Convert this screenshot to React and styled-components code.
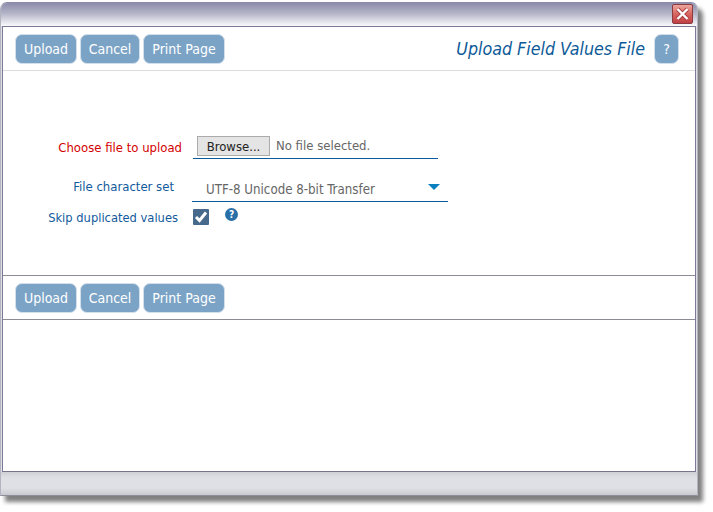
import React from 'react';
import styled, { createGlobalStyle } from 'styled-components';

const GlobalStyle = createGlobalStyle`
    html, body {
        margin: 0;
        padding: 0;
        background: #fff;
    }
    body {
        font-family: "DejaVu Sans Condensed", "DejaVu Sans", sans-serif;
    }
`;

const Page = styled.div`
    width: 713px;
    height: 512px;
    padding-top: 2px;
    box-sizing: border-box;
    overflow: hidden;
`;

const Window = styled.div`
    width: 698px;
    height: 494px;
    box-sizing: border-box;
    display: flex;
    flex-direction: column;
    padding: 0 1px;
    border: 1px solid #b4b4c0;
    border-top-color: #8d8dab;
    border-bottom-color: #8f8f9c;
    border-radius: 7px 7px 0 0;
    background: #e0e1e6;
    box-shadow: 5px 6px 4px #808080;
`;

const TitleBar = styled.div`
    height: 23px;
    flex: none;
    margin: 0 -1px;
    display: flex;
    justify-content: flex-end;
    padding-right: 4px;
    border-radius: 6px 6px 0 0;
    background: linear-gradient(#8d8dab, #b4b4c8 45%, #fbfbfd);
`;

const CloseButton = styled.div`
    width: 21px;
    height: 20px;
    margin-top: 1px;
    box-sizing: border-box;
    display: flex;
    align-items: center;
    justify-content: center;
    border: 1px solid #8e3b40;
    border-radius: 2px;
    background: linear-gradient(#eba79f, #d9655f 50%, #bf4044);
`;

const Body = styled.div`
    flex: 1;
    display: flex;
    flex-direction: column;
    background: #fff;
    border: 1px solid #7c7a98;
    border-bottom-color: #77758e;
`;

const Toolbar = styled.div`
    flex: none;
    box-sizing: border-box;
    display: flex;
    align-items: center;
    gap: 3px;
    padding: 0 16px 0 12px;
    border-bottom: 1px solid ${(p) => (p.$dark ? '#8c8c94' : '#dcdcdf')};
    border-top: ${(p) => (p.$dark ? '1px solid #8c8c94' : 'none')};
    height: ${(p) => (p.$dark ? '45px' : '44px')};
`;

const Button = styled.div`
    height: 30px;
    width: ${(p) => p.$width}px;
    box-sizing: border-box;
    padding-top: 1px;
    display: flex;
    align-items: center;
    justify-content: center;
    color: #fff;
    font-size: 14px;
    background: #7ba3c6;
    border: 1px solid #d3e0ec;
    border-radius: 7px;
`;

const ScreenTitle = styled.div`
    margin-left: auto;
    margin-right: 6px;
    color: #0d5a98;
    font-size: 17.7px;
    font-style: italic;
    white-space: nowrap;
`;

const Form = styled.div`
    height: 204px;
    flex: none;
    box-sizing: border-box;
    padding-top: 65px;
`;

const Row = styled.div`
    display: flex;
    align-items: flex-start;
    height: ${(p) => p.$height}px;
`;

const Label = styled.div`
    width: ${(p) => p.$width}px;
    padding-top: ${(p) => p.$top}px;
    flex: none;
    box-sizing: border-box;
    text-align: right;
    white-space: nowrap;
    font-size: ${(p) => p.$size || 13}px;
    color: ${(p) => (p.$required ? '#d40000' : '#125a9c')};
`;

const FileField = styled.div`
    width: 245px;
    height: 23px;
    margin-left: 11px;
    padding-left: 4px;
    box-sizing: border-box;
    display: flex;
    gap: 6px;
    border-bottom: 1px solid #0b5a9e;
    font-size: 13px;
    color: #666;
`;

const Browse = styled.div`
    width: 73px;
    height: 20px;
    box-sizing: border-box;
    display: flex;
    align-items: center;
    justify-content: center;
    color: #222;
    background: #e4e4e4;
    border: 1px solid #ababab;
`;

const FileName = styled.div`
    line-height: 20px;
`;

const SelectField = styled.div`
    width: 256px;
    height: 25px;
    margin-left: 18px;
    padding: 1px 8px 0 14px;
    box-sizing: border-box;
    display: flex;
    align-items: center;
    justify-content: space-between;
    border-bottom: 1px solid #0b5a9e;
    font-size: 13.2px;
    color: #666;
`;

const Arrow = styled.div`
    width: 0;
    height: 0;
    margin-bottom: 5px;
    border-left: 6px solid transparent;
    border-right: 6px solid transparent;
    border-top: 6px solid #0a7fc0;
`;

const CheckBox = styled.div`
    width: 16px;
    height: 16px;
    margin-left: 15px;
    display: flex;
    align-items: center;
    justify-content: center;
    background: #46698c;
    border-radius: 1px;
`;

const HelpDot = styled.div`
    width: 13px;
    height: 13px;
    margin-left: 16px;
    margin-top: -1px;
    border-radius: 50%;
    display: flex;
    align-items: center;
    justify-content: center;
    background: #2a70a8;
    color: #fff;
    font-size: 10px;
    font-weight: bold;
`;

const Empty = styled.div`
    flex: 1;
`;

const Footer = styled.div`
    height: 23px;
    flex: none;
    margin: 0 -1px;
    background: linear-gradient(#cfd0d6, #dfe0e5 25%, #dfe0e5 70%, #c9cad0);
`;

const Buttons = () => (
    <>
        <Button $width={62}>Upload</Button>
        <Button $width={60}>Cancel</Button>
        <Button $width={82}>Print Page</Button>
    </>
);

const App = () => {
    return (
        <Page>
            <GlobalStyle />
            <Window>
                <TitleBar>
                    <CloseButton>
                        <svg width="15" height="14" viewBox="0 0 15 14">
                            <path d="M2.5 2 L12.5 12 M12.5 2 L2.5 12" stroke="#a83c3e" strokeWidth="4" fill="none" />
                            <path d="M2.5 2 L12.5 12 M12.5 2 L2.5 12" stroke="#fff" strokeWidth="2.4" fill="none" />
                        </svg>
                    </CloseButton>
                </TitleBar>
                <Body>
                    <Toolbar>
                        <Buttons />
                        <ScreenTitle>Upload Field Values File</ScreenTitle>
                        <Button $width={25}>?</Button>
                    </Toolbar>
                    <Form>
                        <Row $height={41}>
                            <Label $width={179} $top={4} $required>Choose file to upload</Label>
                            <FileField>
                                <Browse>Browse...</Browse>
                                <FileName>No file selected.</FileName>
                            </FileField>
                        </Row>
                        <Row $height={32}>
                            <Label $width={171} $top={2}>File character set</Label>
                            <SelectField>
                                UTF-8 Unicode 8-bit Transfer
                                <Arrow />
                            </SelectField>
                        </Row>
                        <Row $height={30}>
                            <Label $width={175} $top={1} $size={12.8}>Skip duplicated values</Label>
                            <CheckBox>
                                <svg width="16" height="16" viewBox="0 0 16 16">
                                    <path d="M3 8 L6.5 11.5 L13 3.5" stroke="#fff" strokeWidth="3" fill="none" />
                                </svg>
                            </CheckBox>
                            <HelpDot>?</HelpDot>
                        </Row>
                    </Form>
                    <Toolbar $dark>
                        <Buttons />
                    </Toolbar>
                    <Empty />
                </Body>
                <Footer />
            </Window>
        </Page>
    );
};

export default App;
